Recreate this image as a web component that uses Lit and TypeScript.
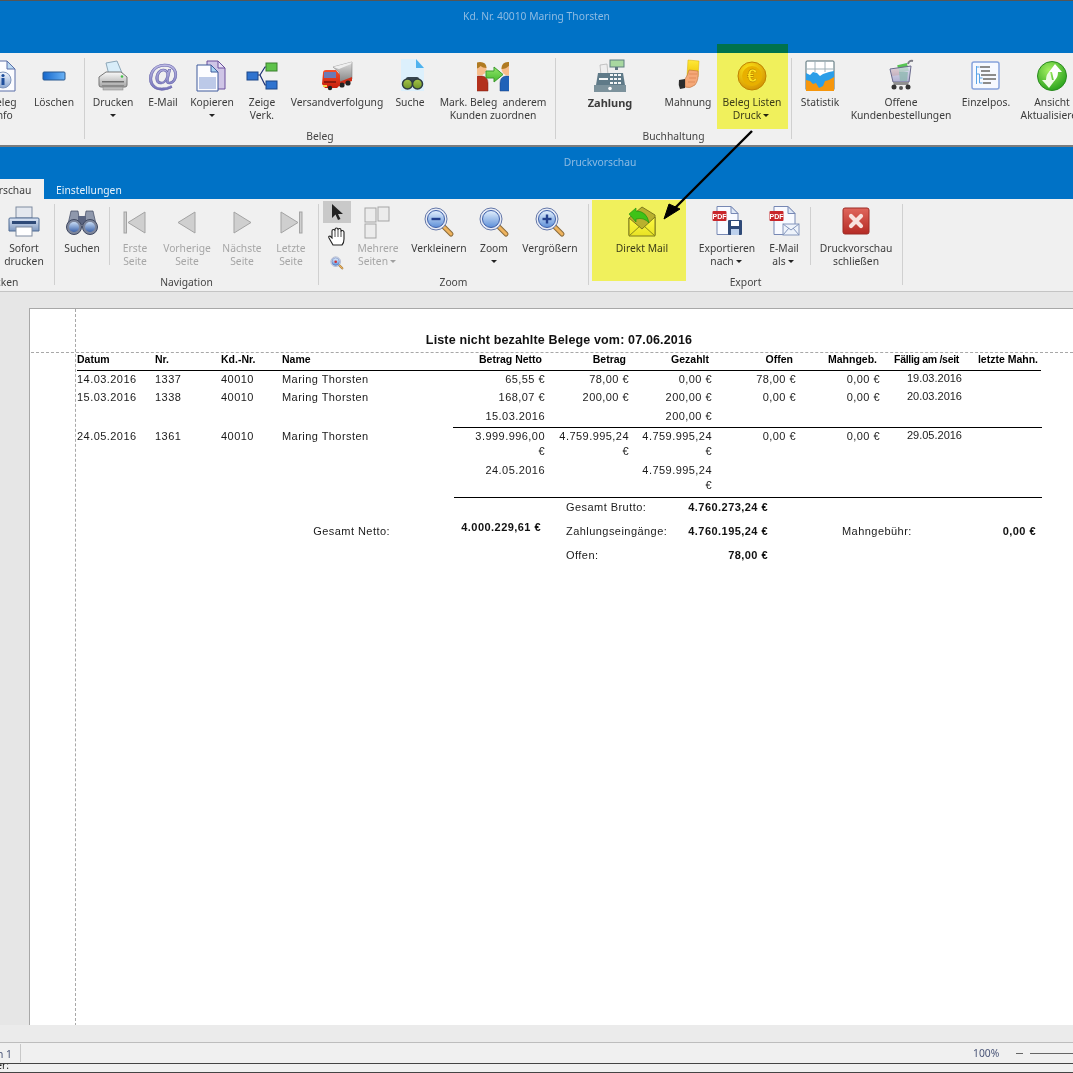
import { LitElement, css, html, svg } from 'lit'
import { customElement } from 'lit/decorators.js'

const grad = (id: string, a: string, b: string, vertical = true) => svg`
  <linearGradient id=${id} x1="0" y1="0" x2=${vertical ? 0 : 1} y2=${vertical ? 1 : 0}>
    <stop offset="0" stop-color=${a} /><stop offset="1" stop-color=${b} />
  </linearGradient>`

const doc = (stroke = '#5a6fa8', fill = '#fbfcff') => svg`
  <path d="M5 1h15l8 8v22H5z" fill=${fill} stroke=${stroke} />
  <path d="M20 1v8h8z" fill="#bcd9f2" stroke=${stroke} />`

const pdfDoc = svg`
  <path d="M6 .5h14l7 7v21H6z" fill="#f8faff" stroke="#7788b4" />
  <path d="M20 .5v7h7z" fill="#dfe8f6" stroke="#7788b4" />
  <rect x="1.500" y="5" width="14" height="10" rx="1" fill="#c8262b" />
  <text x="8.500" y="12.800" text-anchor="middle" font-size="7" font-weight="700" fill="#fff" font-family="Liberation Sans">PDF</text>`

const person = (shirt: string, dark: string) => svg`
  <path d="M1 31v-8q0-6 6-7h4q6 1 6 7v8z" fill=${shirt} stroke=${dark} stroke-width=".5" />
  <circle cx="9" cy="9" r="6.5" fill="#f7bd8a" />
  <path d="M2.5 9q0-7 6.500-7t6.500 6q-4 0-6-2-2 3-7 3z" fill="#b07a22" />`

const magnifier = (sign: 'minus' | 'plus' | 'none', id: string) => svg`
  <defs>${grad(id, '#e4f0fd', '#5d8fd8')}</defs>
  <path d="M20 20l8 8" stroke="#8a6a3a" stroke-width="5" stroke-linecap="round" />
  <path d="M20 20l8 8" stroke="#eeb35e" stroke-width="3" stroke-linecap="round" />
  <circle cx="13" cy="13" r="11" fill="#e8ecf6" stroke="#6477a8" />
  <circle cx="13" cy="13" r="8.500" fill="url(#${id})" stroke="#3e5fa8" />
  ${sign !== 'none' ? svg`<rect x="8.500" y="11.800" width="9" height="2.400" fill="#23408e" />` : ''}
  ${sign === 'plus' ? svg`<rect x="11.800" y="8.500" width="2.400" height="9" fill="#23408e" />` : ''}`

const navBase = 'fill:#cfcfcf;stroke:#a3a3a3'

const icons: Record<string, unknown> = {
  info: svg`<defs>${grad('infoG', '#f4f8ff', '#8aa6d0')}</defs>${doc()}
    <circle cx="16" cy="20" r="8" fill="url(#infoG)" stroke="#7f95bb" />
    <circle cx="16" cy="15.500" r="1.600" fill="#1f4f9c" /><rect x="14.500" y="18" width="3" height="7" fill="#1f4f9c" />`,
  minus: svg`<defs>${grad('minusG', '#1467cc', '#6ab2f5', false)}</defs>
    <rect x="5" y="12" width="22" height="8" rx="1" fill="url(#minusG)" stroke="#28588f" />`,
  printer: svg`<defs>${grad('prG', '#fafafa', '#a5a5a5')}</defs>
    <path d="M9 3l11-2 5 12-13 2z" fill="#d8edf9" stroke="#8da7b8" />
    <path d="M2 17l7-5h15l6 5v8q0 2-2 2H4q-2 0-2-2z" fill="url(#prG)" stroke="#777" />
    <rect x="5" y="21" width="22" height="1.500" fill="#6e6e6e" /><rect x="5" y="25" width="22" height="1" fill="#8a8a8a" />
    <rect x="6" y="27" width="20" height="3" fill="#bcbcbc" stroke="#808080" stroke-width=".5" />
    <circle cx="25" cy="16.500" r="1.300" fill="#46c04a" />`,
  at: svg`<defs>${grad('atG', '#d6d3f2', '#6d6bb5')}</defs>
    <text x="16" y="25.500" text-anchor="middle" font-size="32" font-weight="700" fill="url(#atG)" stroke="#5c5aa5" stroke-width=".5" font-family="Liberation Sans">@</text>`,
  copy: svg`<path d="M11 1h11l7 7v21H11z" fill="#cfc5e6" stroke="#6a4f9c" /><path d="M22 1v7h7z" fill="#e8e2f5" stroke="#6a4f9c" />
    <path d="M1 5h14l7 7v19H1z" fill="#fcfcff" stroke="#3e5a9c" /><path d="M15 5v7h7z" fill="#a9d3f2" stroke="#3e5a9c" />
    <rect x="3" y="17" width="17" height="12" fill="#bcc9e8" />`,
  flow: svg`<path d="M11 15h3l5-8h3M14 15l5 10h3" fill="none" stroke="#1c2f73" stroke-width="1.200" />
    <rect x="1" y="12" width="11" height="8" fill="#2f73cf" stroke="#1d4788" />
    <rect x="20" y="3" width="11" height="8" fill="#5ec24a" stroke="#3a7f2c" />
    <rect x="20" y="21" width="11" height="8" fill="#2f73cf" stroke="#1d4788" />`,
  truck: svg`<defs>${grad('trG', '#dcdcdc', '#7c7c7c')}${grad('cabG', '#f6502a', '#c81e0c')}</defs>
    <path d="M12 7L31 2v17L18 24V12z" fill="url(#trG)" stroke="#707070" stroke-width=".5" />
    <path d="M12 7L31 2l-1 2-12 5z" fill="#efefef" />
    <path d="M18 22l13-5v4l-13 5z" fill="#d0301a" />
    <circle cx="21" cy="25" r="2.600" fill="#222" /><circle cx="27" cy="23" r="2.600" fill="#222" />
    <path d="M2 13q0-3 3-3h10l4 5v10l-3 3H4l-3-4z" fill="url(#cabG)" />
    <path d="M3 12h12v6H3z" fill="#6c7ab4" />
    <path d="M3 21h12v2H3z" fill="#8c1a0c" /><rect x="2" y="25" width="4" height="2" fill="#f2d04a" />
    <circle cx="9" cy="28" r="2.200" fill="#222" />`,
  search: svg`<defs>${grad('seG', '#a8c64a', '#6e9426')}</defs>
    <path d="M7 -1h15l8 9v23H7z" fill="#dcf0fc" /><path d="M22 -1v9h8z" fill="#4eb2ee" />
    <rect x="12" y="17" width="13" height="6" rx="2" fill="#36454e" />
    <circle cx="13.500" cy="24" r="5" fill="url(#seG)" stroke="#2d3b44" stroke-width="1.500" />
    <circle cx="23.500" cy="24" r="5" fill="url(#seG)" stroke="#2d3b44" stroke-width="1.500" />`,
  swap: svg`<defs>${grad('swG', '#92e86a', '#45b82e')}</defs>
    <svg x="0" y="0" width="32" height="32" viewBox="0 0 32 32">
      <g transform="translate(-6,0)">${person('#b3301c', '#7a1f10')}</g>
      <g transform="translate(22,0)">${person('#1f62b8', '#143f80')}</g>
    </svg>
    <path d="M9 11h8V7l9 7.500L17 22v-4H9z" fill="url(#swG)" stroke="#3c9a2c" />`,
  register: svg`<rect x="16" y="0" width="14" height="7" fill="#a8d8a0" stroke="#5f7f80" />
    <rect x="21" y="7" width="3" height="3" fill="#5f7682" />
    <path d="M6 5l7-1 1 11H7z" fill="#eeeeee" stroke="#a5a5a5" stroke-width=".6" />
    <path d="M4 13h25l2 12H2z" fill="#5f7a88" />
    <g fill="#f4f6f6"><rect x="16" y="14" width="3" height="2" /><rect x="20" y="14" width="3" height="2" /><rect x="24" y="14" width="3" height="2" />
    <rect x="16" y="18" width="3" height="2" /><rect x="20" y="18" width="3" height="2" /><rect x="24" y="18" width="3" height="2" />
    <rect x="16" y="22" width="3" height="2" /><rect x="20" y="22" width="3" height="2" /><rect x="24" y="22" width="3" height="2" />
    <rect x="5" y="18" width="9" height="2" /></g>
    <rect x="0" y="25" width="32" height="7" fill="#7c929c" /><circle cx="16" cy="28.500" r="1.800" fill="#fff" />`,
  card: svg`<defs>${grad('cardG', '#ffe93a', '#eec200')}</defs>
    <path d="M16 0l11 1-1 16-11-1z" fill="url(#cardG)" stroke="#d8ae00" stroke-width=".5" />
    <path d="M13 19q3-4 4-9l9 1q1 9-3 14-5 4-10 2z" fill="#f5a878" stroke="#b8703e" stroke-width=".6" />
    <path d="M17 14h8M17 18h7M16 22h7" stroke="#d9824e" stroke-width=".7" fill="none" />
    <path d="M7 20l6-1v9l-5 1q-2-4-1-9z" fill="#2c2c2c" />`,
  coin: svg`<defs><radialGradient id="coinG" cx=".4" cy=".3" r=".8"><stop offset="0" stop-color="#ffe83c" /><stop offset="1" stop-color="#cf8a00" /></radialGradient></defs>
    <circle cx="16" cy="16" r="14" fill="url(#coinG)" stroke="#c08200" />
    <circle cx="16" cy="16" r="10" fill="#e8b000" />
    <text x="16" y="22" text-anchor="middle" font-size="18" font-weight="700" fill="#ffe24a" stroke="#a56f00" stroke-width=".3" font-family="Liberation Sans">€</text>`,
  chart: svg`<rect x="2" y="1" width="28" height="29" rx="1" fill="#fff" stroke="#4f6a72" />
    <path d="M2 9h28M11 1v11M21 1v11" stroke="#9fb0b8" />
    <path d="M2 13l4 2 3-3 4 1 3 3 3-2 3-1 3-1 5-1v18H2z" fill="#2a9ee8" />
    <path d="M2 31V20l4 1 3 3 3-1 3 5 4-2 2-5 4-1 5-3v14z" fill="#f6960c" />`,
  cart: svg`<defs>${grad('cartG', '#e0e2f4', '#a0a0c8')}</defs>
    <path d="M28 1q-4-1-5 3" fill="none" stroke="#7a7a84" stroke-width="2" />
    <rect x="13" y="4" width="10" height="8" fill="#56c452" transform="rotate(-14 18 8)" />
    <path d="M6 10l7-2 2 7-8 1z" fill="#f0905a" />
    <path d="M5 9l21-3-2 16H8z" fill="url(#cartG)" fill-opacity=".8" stroke="#6a6a8c" />
    <path d="M14 12h9l-1 9h-7z" fill="#8fb8b0" fill-opacity=".8" />
    <path d="M8 22h16l-1 3H9z" fill="#909090" />
    <circle cx="9" cy="27" r="2.500" fill="#333" /><circle cx="23" cy="27" r="2.500" fill="#333" /><circle cx="16" cy="28" r="2" fill="#555" />`,
  tree: svg`<rect x="2" y="2" width="27" height="27" rx="2" fill="#f6f9ff" stroke="#87a3dc" stroke-width="1.500" />
    <path d="M6.500 6v18M6.500 7h3M6.500 14h3M9.500 14v9M9.500 18h3M9.500 23h3" stroke="#5aa4e6" fill="none" />
    <g fill="#8c8c8c"><rect x="10" y="6" width="10" height="2" /><rect x="11" y="10" width="9" height="2" /><rect x="11" y="14" width="15" height="2" />
    <rect x="13" y="18" width="13" height="2" /><rect x="13" y="22" width="8" height="2" /></g>`,
  refresh: svg`<defs><radialGradient id="refG" cx=".4" cy=".3" r=".8"><stop offset="0" stop-color="#a4ef62" /><stop offset="1" stop-color="#1c9a14" /></radialGradient></defs>
    <circle cx="16" cy="16" r="14.500" fill="url(#refG)" stroke="#2a8a20" />
    <path d="M19 4l7 8h-4q0 6-4 9-1-5-2-9h-3z" fill="#fff" />
    <path d="M13 28l-7-8h4q0-6 4-9 1 5 2 9h3z" fill="#eefae6" />`,
  printerBlue: svg`<defs>${grad('pbG', '#dfe8f6', '#7d97bf')}</defs>
    <rect x="8" y="1" width="16" height="11" fill="#e4e8ef" stroke="#7f8ba0" />
    <path d="M2 12h28q1 0 1 1v12H1V13q0-1 1-1z" fill="url(#pbG)" stroke="#4f6a92" />
    <rect x="4" y="15" width="24" height="3" fill="#2e4a78" />
    <rect x="8" y="21" width="16" height="9" fill="#fff" stroke="#7f8ba0" />`,
  binoculars: svg`<defs>${grad('biG', '#c8dcf5', '#3b63ab')}</defs>
    <path d="M5 5h7l2 13H2zM20 5h7l3 13H18z" fill="#8f98ac" stroke="#3f4860" stroke-width=".7" />
    <rect x="12" y="10" width="8" height="9" fill="#5a6480" />
    <circle cx="8" cy="21" r="7.500" fill="#7d869c" stroke="#3f4860" /><circle cx="24" cy="21" r="7.500" fill="#7d869c" stroke="#3f4860" />
    <circle cx="8" cy="21" r="5" fill="url(#biG)" /><circle cx="24" cy="21" r="5" fill="url(#biG)" />`,
  first: svg`<rect x="5" y="6" width="2.500" height="21" style=${navBase} /><path d="M26 6v21L9 16.500z" style=${navBase} />`,
  prev: svg`<path d="M24 6v21L7 16.500z" style=${navBase} />`,
  next: svg`<path d="M8 6v21l17-10.500z" style=${navBase} />`,
  last: svg`<rect x="24.500" y="6" width="2.500" height="21" style=${navBase} /><path d="M6 6v21l17-10.500z" style=${navBase} />`,
  pages: svg`<g fill="#ececec" stroke="#a5a5a5"><rect x="3" y="2" width="11" height="14" /><rect x="16" y="1" width="11" height="14" /><rect x="3" y="18" width="11" height="14" /></g>`,
  zoomOut: magnifier('minus', 'zoG'),
  zoomFit: magnifier('none', 'zfG'),
  zoomIn: magnifier('plus', 'ziG'),
  mail: svg`<defs>${grad('maG', '#fffbb0', '#e8e25c')}</defs>
    <path d="M3 12L16 1l13 8v20H3z" fill="#b9b078" stroke="#7e7a48" />
    <path d="M3 12l13 11 13-12v19H3z" fill="url(#maG)" stroke="#7e7a48" />
    <path d="M3 30l11-10M29 30l-11-10" stroke="#8a8a3e" fill="none" />
    <path d="M3 8l7-6v3q11 0 13 12-5-6-13-4v3z" fill="#3fc23a" stroke="#1c8a20" stroke-width=".6" />`,
  pdfSave: svg`${pdfDoc}<rect x="17" y="14" width="14" height="15" rx="1" fill="#2f4a78" />
    <rect x="20" y="15" width="8" height="5" fill="#fff" /><rect x="20" y="23" width="8" height="6" fill="#bcd0ec" />`,
  pdfMail: svg`${pdfDoc}<rect x="15" y="18" width="16" height="11" fill="#eef3fb" stroke="#8496bc" />
    <path d="M15 18l8 6 8-6M15 29l6-7M31 29l-6-7" stroke="#8496bc" fill="none" />`,
  close: svg`<defs>${grad('clG', '#e0665c', '#b52a24')}</defs>
    <rect x="3" y="2" width="26" height="26" rx="2" fill="url(#clG)" stroke="#9c2a24" />
    <path d="M11 10l10 10M21 10L11 20" stroke="#f8e2de" stroke-width="4.200" stroke-linecap="round" />`,
}

interface Item { c: number; icon?: string; lines?: string[]; caret?: boolean; off?: boolean; strong?: boolean; kind?: 'sep' | 'tools' }
interface Group { x: number; end: number; caption: string; items: Item[] }

const topGroups: Group[] = [
  { x: -28, end: 85, caption: '', items: [
    { c: 3, icon: 'info', lines: ['Beleg', 'Info'] },
    { c: 54, icon: 'minus', lines: ['Löschen'] },
  ] },
  { x: 85, end: 556, caption: 'Beleg', items: [
    { c: 113, icon: 'printer', lines: ['Drucken', ''], caret: true },
    { c: 163, icon: 'at', lines: ['E-Mail'] },
    { c: 212, icon: 'copy', lines: ['Kopieren', ''], caret: true },
    { c: 262, icon: 'flow', lines: ['Zeige', 'Verk.'] },
    { c: 337, icon: 'truck', lines: ['Versandverfolgung'] },
    { c: 410, icon: 'search', lines: ['Suche'] },
    { c: 493, icon: 'swap', lines: ['Mark. Beleg  anderem', 'Kunden zuordnen'] },
  ] },
  { x: 556, end: 792, caption: 'Buchhaltung', items: [
    { c: 610, icon: 'register', lines: ['Zahlung'], strong: true },
    { c: 688, icon: 'card', lines: ['Mahnung'] },
    { c: 752, icon: 'coin', lines: ['Beleg Listen', 'Druck'], caret: true },
  ] },
  { x: 792, end: 1120, caption: '', items: [
    { c: 820, icon: 'chart', lines: ['Statistik'] },
    { c: 901, icon: 'cart', lines: ['Offene', 'Kundenbestellungen'] },
    { c: 986, icon: 'tree', lines: ['Einzelpos.'] },
    { c: 1052, icon: 'refresh', lines: ['Ansicht', 'Aktualisieren'] },
  ] },
]

const previewGroups: Group[] = [
  { x: -58, end: 55, caption: 'Drucken', items: [
    { c: 24, icon: 'printerBlue', lines: ['Sofort', 'drucken'] },
  ] },
  { x: 55, end: 319, caption: 'Navigation', items: [
    { c: 82, icon: 'binoculars', lines: ['Suchen'] },
    { c: 109, kind: 'sep' },
    { c: 135, icon: 'first', lines: ['Erste', 'Seite'], off: true },
    { c: 187, icon: 'prev', lines: ['Vorherige', 'Seite'], off: true },
    { c: 242, icon: 'next', lines: ['Nächste', 'Seite'], off: true },
    { c: 291, icon: 'last', lines: ['Letzte', 'Seite'], off: true },
  ] },
  { x: 319, end: 589, caption: 'Zoom', items: [
    { c: 337, kind: 'tools' },
    { c: 378, icon: 'pages', lines: ['Mehrere', 'Seiten'], caret: true, off: true },
    { c: 439, icon: 'zoomOut', lines: ['Verkleinern'] },
    { c: 494, icon: 'zoomFit', lines: ['Zoom', ''], caret: true },
    { c: 550, icon: 'zoomIn', lines: ['Vergrößern'] },
  ] },
  { x: 589, end: 903, caption: 'Export', items: [
    { c: 642, icon: 'mail', lines: ['Direkt Mail'] },
    { c: 727, icon: 'pdfSave', lines: ['Exportieren', 'nach'], caret: true },
    { c: 784, icon: 'pdfMail', lines: ['E-Mail', 'als'], caret: true },
    { c: 810, kind: 'sep' },
    { c: 856, icon: 'close', lines: ['Druckvorschau', 'schließen'] },
  ] },
]

const ITEM_W = 44

type Row = { cells: string[]; line?: boolean; h: number }

const rows: Row[] = [
  { h: 18, cells: ['14.03.2016', '1337', '40010', 'Maring Thorsten', '65,55 €', '78,00 €', '0,00 €', '78,00 €', '0,00 €', '19.03.2016', ''] },
  { h: 19, cells: ['15.03.2016', '1338', '40010', 'Maring Thorsten', '168,07 €', '200,00 €', '200,00 €', '0,00 €', '0,00 €', '20.03.2016', ''] },
  { h: 19, cells: ['', '', '', '', '15.03.2016', '', '200,00 €', '', '', '', ''] },
  { h: 34, line: true, cells: ['24.05.2016', '1361', '40010', 'Maring Thorsten', '3.999.996,00\n€', '4.759.995,24\n€', '4.759.995,24\n€', '0,00 €', '0,00 €', '29.05.2016', ''] },
  { h: 35, cells: ['', '', '', '', '24.05.2016', '', '4.759.995,24\n€', '', '', '', ''] },
]

const heads = ['Datum', 'Nr.', 'Kd.-Nr.', 'Name', 'Betrag Netto', 'Betrag', 'Gezahlt', 'Offen', 'Mahngeb.', 'Fällig am /seit', 'letzte Mahn.']

@customElement('app-root')
export class AppRoot extends LitElement {
  private renderItem(item: Item, prevEnd: number) {
    if (item.kind === 'sep') {
      return html`<div class="inner-sep" style="margin-left:${item.c - prevEnd}px"></div>`
    }
    const margin = item.c - ITEM_W / 2 - prevEnd
    if (item.kind === 'tools') {
      return html`
        <div class="tools" style="margin-left:${margin}px">
          <div class="tool active">
            <svg width="14" height="18" viewBox="0 0 14 18"><path d="M2 1v14l3.500-3.500L8 17l2.500-1-2.500-5h5z" fill="#222" /></svg>
          </div>
          <div class="tool">
            <svg width="20" height="20" viewBox="0 0 20 20"><path d="M6 18L2 11q-1-2 1-2l2 2V4q0-1.500 1.500-1.500T8 4V2.500q0-1.500 1.500-1.500T11 2.500V3q0-1.500 1.500-1.500T14 3v1.500q0-1 1.300-1T17 5v7q0 4-2 6z" fill="#fff" stroke="#222" stroke-width="1.100" /><path d="M8 4v6M11 3v7M14 4v6" stroke="#222" stroke-width=".8" /></svg>
          </div>
          <div class="tool small">
            <svg width="14" height="14" viewBox="0 0 32 32">${magnifier('none', 'zsG')}<circle cx="13" cy="13" r="3" fill="#d03030" /></svg>
          </div>
        </div>`
    }
    const last = (item.lines?.length ?? 1) - 1
    return html`
      <div class="item ${item.off ? 'off' : ''} ${item.strong ? 'strong' : ''}" style="margin-left:${margin}px">
        <svg class="icon" width="32" height="32" viewBox="0 0 32 32">${icons[item.icon!]}</svg>
        <div class="label">
          ${item.lines!.map((line, i) => html`<div class="line">${line}${item.caret && i === last ? html`<i class="caret"></i>` : ''}</div>`)}
        </div>
      </div>`
  }

  private renderGroup(group: Group) {
    let end = group.x
    return html`
      <section class="group" style="width:${group.end - group.x}px">
        <div class="items">
          ${group.items.map(item => {
            const out = this.renderItem(item, end)
            end = item.kind === 'sep' ? item.c + 1 : item.c + ITEM_W / 2
            return out
          })}
        </div>
        <div class="caption">${group.caption}</div>
      </section>`
  }

  render() {
    return html`
      <div class="titlebar first"><span class="title">Kd. Nr. 40010 Maring Thorsten</span></div>
      <div class="ribbon dark-edge" style="margin-left:${topGroups[0].x}px">${topGroups.map(g => this.renderGroup(g))}</div>

      <div class="titlebar second">
        <span class="title">Druckvorschau</span>
        <div class="tabs">
          <div class="tab active">Druckvorschau</div>
          <div class="tab">Einstellungen</div>
        </div>
      </div>
      <div class="ribbon" style="margin-left:${previewGroups[0].x}px">${previewGroups.map(g => this.renderGroup(g))}</div>

      <main class="preview">
        <div class="page">
          <div class="guide-v"></div>
          <div class="guide-h"></div>
          <div class="report">
            <h1>Liste nicht bezahlte Belege vom: 07.06.2016</h1>
            <div class="row head">
              ${heads.map((h, i) => html`<div class="cell ${i > 3 ? 'num' : ''} ${i === 9 ? 'tight' : ''}">${h}</div>`)}
            </div>
            ${rows.map(r => html`
              <div class="row ${r.line ? 'ruled' : ''}" style="height:${r.h}px">
                ${r.cells.map((c, i) => html`<div class="cell ${i > 3 ? 'num' : ''} ${i === 9 ? 'due' : ''}">${c}</div>`)}
              </div>
            `)}
            <div class="totals">
              <span class="t-label" style="grid-area:1/4">Gesamt Brutto:</span>
              <b class="t-val" style="grid-area:1/5">4.760.273,24 €</b>
              <span class="t-net" style="grid-area:2/1">Gesamt Netto:</span>
              <b class="t-val t-up" style="grid-area:2/2">4.000.229,61 €</b>
              <span class="t-label" style="grid-area:2/4">Zahlungseingänge:</span>
              <b class="t-val" style="grid-area:2/5">4.760.195,24 €</b>
              <span class="t-label" style="grid-area:2/7">Mahngebühr:</span>
              <b class="t-val" style="grid-area:2/8">0,00 €</b>
              <span class="t-label" style="grid-area:3/4">Offen:</span>
              <b class="t-val" style="grid-area:3/5">78,00 €</b>
            </div>
          </div>
        </div>
      </main>

      <div class="bottom-strip"></div>
      <footer class="status">
        <div class="pages-info"><span>Seite 1 von 1</span></div>
        <div class="zoom-info">
          <span>100%</span>
          <i class="zoom-minus"></i>
          <i class="zoom-track"></i>
        </div>
      </footer>
      <div class="app-status"><span>Benutzer:</span></div>

      <div class="mark" style="left:717px;top:43px;width:71px;height:85px"></div>
      <div class="mark" style="left:592px;top:199px;width:94px;height:81px"></div>
      <svg class="arrow" width="1073" height="1073" viewBox="0 0 1073 1073">
        <path d="M752 130L673 209" stroke="#000" stroke-width="2.400" />
        <path d="M664 218l5-15 11 5z" fill="#000" stroke="#000" />
      </svg>
    `
  }

  static styles = css`
    :host {
      display: block;
      position: relative;
      width: 1073px;
      height: 1073px;
      overflow: hidden;
      background: #f0f0f0;
      border-top: 1px solid #555;
      box-sizing: border-box;
      font-family: 'Noto Sans', sans-serif;
      font-size: 10.300px;
      color: #3c3c3c;
    }

    .titlebar {
      background: #0072c6;
      position: relative;
      text-align: center;
      color: #8dbbe2;
      height: 52px;
      box-sizing: border-box;
      line-height: 13px;
      padding-top: 9px;
    }
    .titlebar.second {
      padding-left: 127px;
    }
    .tabs {
      position: absolute;
      left: -54px;
      bottom: 0;
      display: flex;
    }
    .tab {
      height: 20px;
      padding: 0 12px;
      line-height: 23px;
      color: #e6f1fa;
    }
    .tab.active {
      width: 98px;
      padding: 0;
      text-align: center;
      background: #f0f0f0;
      color: #3c3c3c;
    }

    .ribbon {
      display: flex;
      height: 92px;
      width: 1300px;
      background: #f0f0f0;
      border-bottom: 1px solid #c4c4c4;
    }
    .ribbon.dark-edge {
      border-bottom: 2px solid #7c7c7c;
    }
    .group {
      flex: none;
      box-sizing: border-box;
      display: flex;
      flex-direction: column;
      height: 81px;
      margin-top: 5px;
      border-right: 1px solid #d0d0d0;
    }
    .items {
      flex: none;
      display: flex;
      height: 71px;
    }
    .caption {
      flex: none;
      text-align: center;
      line-height: 13px;
      margin-top: 1px;
      white-space: nowrap;
      color: #444;
    }

    .item {
      flex: none;
      width: 44px;
      display: flex;
      flex-direction: column;
      align-items: center;
    }
    .icon {
      flex: none;
      margin-top: 2px;
      overflow: visible;
    }
    .label {
      margin-top: 4px;
      text-align: center;
      line-height: 13px;
      white-space: nowrap;
    }
    .line {
      height: 13px;
      white-space: pre;
    }
    .item.off .label {
      color: #a6a6a6;
    }
    .item.strong .label {
      font-weight: 700;
      font-size: 11px;
    }
    .caret {
      display: inline-block;
      width: 0;
      height: 0;
      margin: 0 2px;
      vertical-align: 2px;
      border: 3px solid transparent;
      border-top-color: #222;
      border-bottom: 0;
    }
    .item.off .caret {
      border-top-color: #a0a0a0;
    }
    .inner-sep {
      flex: none;
      width: 1px;
      height: 58px;
      margin-top: 3px;
      background: #d0d0d0;
    }
    .tools {
      flex: none;
      width: 44px;
      display: flex;
      flex-direction: column;
      align-items: center;
      margin-top: -3px;
    }
    .tool {
      width: 28px;
      height: 22px;
      margin-bottom: 3px;
      display: flex;
      align-items: center;
      justify-content: center;
    }
    .tool.active {
      background: #c9c9c9;
    }
    .tool.small {
      margin-top: 5px;
      height: 14px;
    }

    .preview {
      height: 733px;
      padding: 16px 0 0 29px;
      box-sizing: border-box;
      background: #e6e6e6;
      overflow: hidden;
    }
    .page {
      position: relative;
      height: 717px;
      background: #fff;
      border-left: 1px solid #a8a8a8;
      border-top: 1px solid #a8a8a8;
    }
    .guide-v {
      position: absolute;
      left: 45px;
      top: 0;
      bottom: 0;
      border-left: 1px dashed #a8a8a8;
    }
    .guide-h {
      position: absolute;
      left: 1px;
      right: 0;
      top: 43px;
      border-top: 1px dashed #a8a8a8;
    }

    .report {
      position: relative;
      width: 964px;
      margin-left: 47px;
      padding-top: 24px;
      font-family: 'Liberation Sans', sans-serif;
      font-size: 11px;
      letter-spacing: 0.45px;
      color: #1a1a1a;
    }
    h1 {
      margin: 0;
      height: 14px;
      line-height: 14px;
      text-align: center;
      font-size: 12.500px;
      font-weight: 700;
      letter-spacing: 0.15px;
      color: #111;
    }
    .row {
      display: grid;
      grid-template-columns: 78px 66px 61px 171px 92px 84px 83px 84px 84px 82px 79px;
      line-height: 15px;
      box-sizing: border-box;
      padding-top: 1px;
    }
    .row.head {
      margin-top: 5px;
      height: 19px;
      padding-top: 0;
      border-bottom: 1px solid #000;
      font-weight: 700;
      font-size: 10.500px;
      letter-spacing: 0;
      color: #000;
    }
    .row.ruled {
      box-sizing: content-box;
      margin-top: 1px;
      padding-top: 0;
    }
    .row.ruled::before {
      content: '';
      position: absolute;
      left: 376px;
      width: 589px;
      margin-top: -1px;
      border-top: 1px solid #000;
    }
    .row.ruled .cell {
      padding-top: 1px;
    }
    .cell {
      white-space: pre-line;
    }
    .num {
      text-align: right;
    }
    .row.head .num {
      padding-right: 3px;
    }
    .row.head .tight {
      letter-spacing: -0.3px;
      white-space: nowrap;
    }
    .due {
      margin-top: -1px;
      letter-spacing: 0;
    }

    .totals {
      display: grid;
      grid-template-columns: 313px 151px 25px 102px 100px 74px 100px 94px;
      grid-template-rows: 18px 30px 18px;
      padding-top: 1px;
      line-height: 15px;
      align-items: center;
      position: relative;
    }
    .totals::before {
      content: '';
      position: absolute;
      left: 377px;
      width: 588px;
      top: 0;
      border-top: 1px solid #000;
    }
    .t-label {
      white-space: nowrap;
    }
    .t-net {
      text-align: right;
    }
    .t-val {
      text-align: right;
      white-space: nowrap;
      color: #111;
    }
    .t-up {
      margin-top: -8px;
    }

    .bottom-strip {
      height: 17px;
      background: #ebebeb;
      border-bottom: 1px solid #bdbdbd;
    }
    .status {
      display: flex;
      justify-content: space-between;
      height: 20px;
      background: #f0f0f0;
      border-bottom: 1px solid #444;
      color: #4a5578;
      line-height: 20px;
    }
    .pages-info {
      width: 21px;
      height: 18px;
      margin-top: 1px;
      border-right: 1px solid #c8c8c8;
      overflow: hidden;
      direction: rtl;
      white-space: nowrap;
      padding-right: 8px;
      box-sizing: border-box;
    }
    .pages-info span {
      unicode-bidi: plaintext;
    }
    .zoom-info {
      display: flex;
      align-items: center;
      width: 100px;
      flex: none;
    }
    .zoom-minus {
      width: 7px;
      height: 1px;
      margin-left: 17px;
      background: #666;
    }
    .zoom-track {
      flex: 1;
      height: 1px;
      margin-left: 7px;
      background: #666;
    }
    .app-status {
      height: 8px;
      overflow: hidden;
      border-bottom: 1px solid #444;
      line-height: 3px;
      color: #222;
      position: relative;
    }
    .app-status span {
      position: absolute;
      right: 1064px;
      white-space: nowrap;
    }

    .mark {
      position: absolute;
      background: #ffff62;
      mix-blend-mode: multiply;
    }
    .arrow {
      position: absolute;
      left: 0;
      top: 0;
      pointer-events: none;
    }
  `
}

declare global {
  interface HTMLElementTagNameMap {
    'app-root': AppRoot
  }
}
